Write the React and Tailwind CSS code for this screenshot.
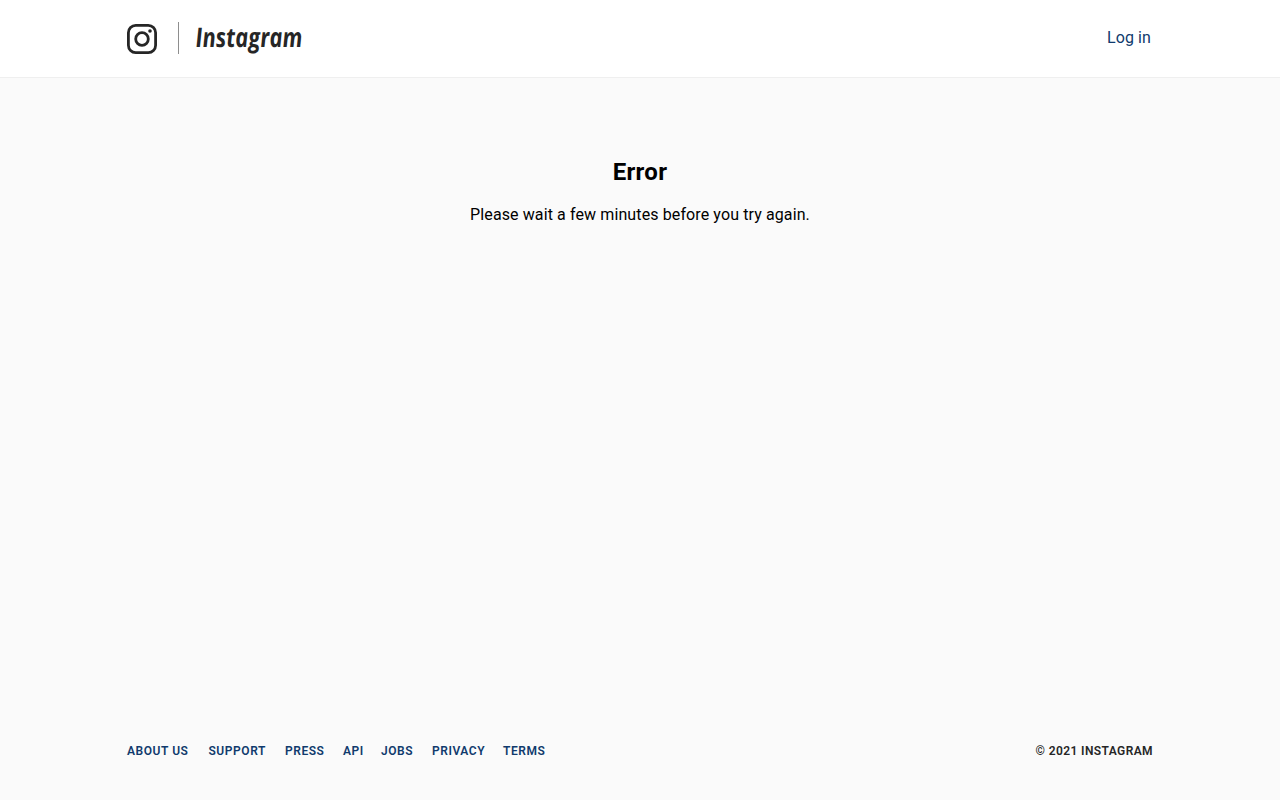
const links = [
  ['About us', 'w-[81.5px]'],
  ['Support', 'w-[76.5px]'],
  ['Press', 'w-[58px]'],
  ['API', 'w-[38px]'],
  ['Jobs', 'w-[51px]'],
  ['Privacy', 'w-[71px]'],
  ['Terms', 'w-[42px]'],
];

function Logo() {
  return (
    <a href="#" aria-label="Instagram" className="flex items-center">
      <svg className="mt-px h-[30px] w-[30px]" viewBox="0 0 30 30" fill="none" stroke="#262626">
        <rect x="1.4" y="1.4" width="27.2" height="27.2" rx="7.3" strokeWidth="2.8" />
        <circle cx="15" cy="15" r="6.3" strokeWidth="2.8" />
        <circle cx="23" cy="7" r="1.8" fill="#262626" stroke="none" />
      </svg>
      <span className="ml-[21px] h-8 w-px bg-[#8e8e8e]" />
      <svg className="ml-[17px] h-[38px] w-[107px] overflow-visible" viewBox="0 0 107 38">
        <text
          x="0"
          y="0"
          transform="translate(0 28) skewX(4)"
          textLength="107"
          lengthAdjust="spacingAndGlyphs"
          className="fill-[#262626] font-['Open_Sans',sans-serif] text-[27px] font-bold italic"
        >
          Instagram
        </text>
      </svg>
    </a>
  );
}

export default function App() {
  return (
    <div className="flex h-screen flex-col bg-[#fafafa] font-['Roboto',sans-serif] text-black">
      <header className="h-[78px] border-b border-[#efefef] bg-white">
        <div className="mx-auto flex h-[76px] w-[1026px] items-center justify-between">
          <Logo />
          <a href="#" className="mr-[2px] mb-px text-base tracking-[0.1px] text-[#103a6d]">Log in</a>
        </div>
      </header>
      <main className="flex flex-1 flex-col items-center pt-[76px] text-center">
        <h2 className="text-2xl leading-9 font-bold tracking-[0.3px]">Error</h2>
        <p className="mt-[13px] text-base leading-6 tracking-[0.11px]">Please wait a few minutes before you try again.</p>
      </main>
      <footer className="mx-auto mb-10 flex w-[1026px] items-center justify-between text-xs leading-[18px] font-semibold tracking-[0.4px] uppercase">
        <nav className="flex tracking-[0.55px] text-[#103a6d]">
          {links.map(([label, width]) => (
            <a key={label} href="#" className={`${width} whitespace-nowrap`}>{label}</a>
          ))}
        </nav>
        <span className="text-[#262626]">© 2021 Instagram</span>
      </footer>
    </div>
  );
}
